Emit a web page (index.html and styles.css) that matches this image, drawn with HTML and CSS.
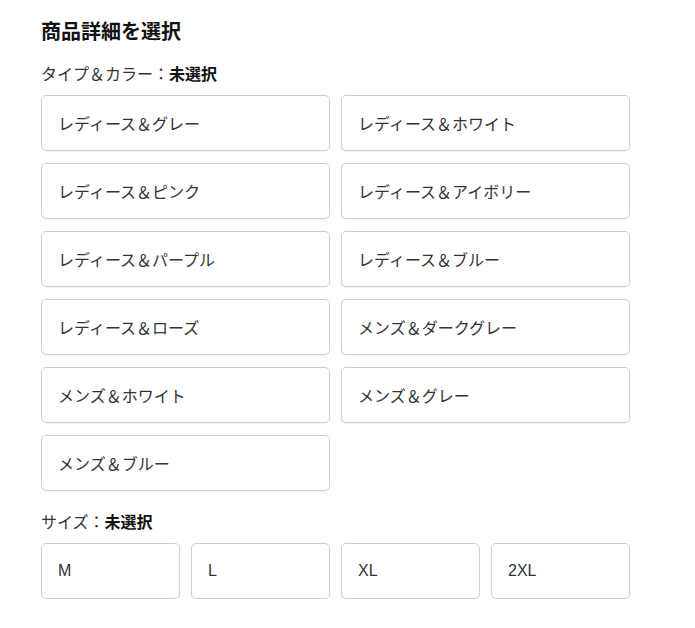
FILE: index.html
```html
<!DOCTYPE html>
<html lang="ja">
<head>
<meta charset="utf-8">
<link rel="stylesheet" href="styles.css">
</head>
<body>
<div class="page">
  <h1 class="title">商品詳細を選択</h1>
  <div class="label">タイプ＆カラー：<b>未選択</b></div>
  <div class="grid two">
    <div class="opt">レディース＆グレー</div>
    <div class="opt">レディース＆ホワイト</div>
    <div class="opt">レディース＆ピンク</div>
    <div class="opt">レディース＆アイボリー</div>
    <div class="opt">レディース＆パープル</div>
    <div class="opt">レディース＆ブルー</div>
    <div class="opt">レディース＆ローズ</div>
    <div class="opt">メンズ＆ダークグレー</div>
    <div class="opt">メンズ＆ホワイト</div>
    <div class="opt">メンズ＆グレー</div>
    <div class="opt">メンズ＆ブルー</div>
  </div>
  <div class="label size-label">サイズ：<b>未選択</b></div>
  <div class="grid four">
    <div class="opt">M</div>
    <div class="opt">L</div>
    <div class="opt">XL</div>
    <div class="opt">2XL</div>
  </div>
</div>
</body>
</html>
```
FILE: styles.css
```css
html, body {
  margin: 0;
  padding: 0;
  background: #fff;
}
body {
  font-family: "Liberation Sans", "Noto Sans CJK JP", sans-serif;
  color: #222;
}
.page {
  width: 589px;
  padding: 20px 0 0 41px;
}
.title {
  margin: 0;
  font-size: 20px;
  line-height: 24px;
  font-weight: 700;
  color: #111;
}
.label {
  margin: 20px 0 9px;
  font-size: 16px;
  line-height: 22px;
  color: #333;
}
.label b {
  font-weight: 700;
  color: #111;
}
.size-label {
  margin: 21px 0 9px;
}
.grid {
  display: grid;
  row-gap: 12px;
  column-gap: 11px;
}
.two {
  grid-template-columns: 289px 289px;
}
.four {
  grid-template-columns: repeat(4, 139px);
}
.opt {
  box-sizing: border-box;
  height: 56px;
  border: 1px solid #cfcfcf;
  border-radius: 5px;
  padding: 0 16px;
  display: flex;
  align-items: center;
  font-size: 16px;
  color: #333;
  box-shadow: 0 1px 1px rgba(0,0,0,0.04);
}
```
